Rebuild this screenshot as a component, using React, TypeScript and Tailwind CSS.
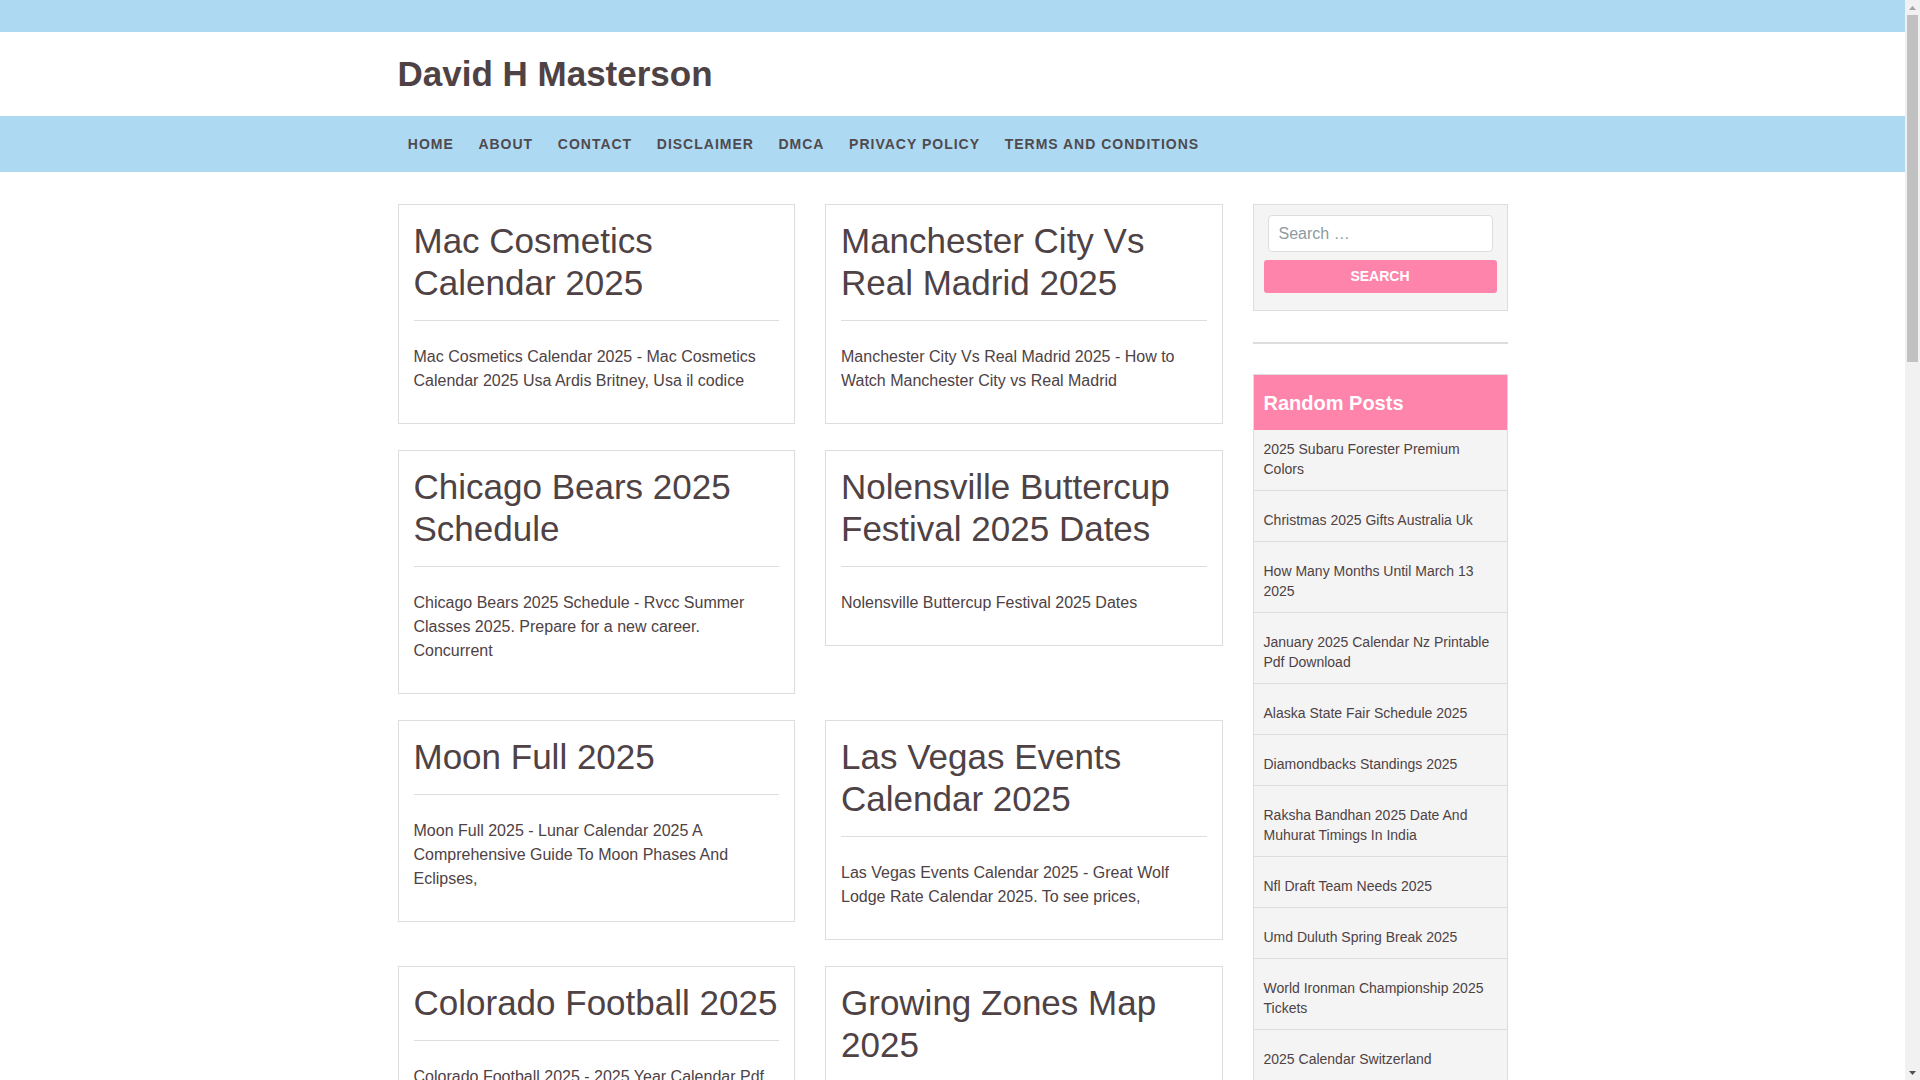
import React from 'react';

interface Post {
  title: string;
  excerpt: string;
}

const posts: Post[] = [
  { title: 'Mac Cosmetics Calendar 2025', excerpt: 'Mac Cosmetics Calendar 2025 - Mac Cosmetics Calendar 2025 Usa Ardis Britney, Usa il codice' },
  { title: 'Manchester City Vs Real Madrid 2025', excerpt: 'Manchester City Vs Real Madrid 2025 - How to Watch Manchester City vs Real Madrid' },
  { title: 'Chicago Bears 2025 Schedule', excerpt: 'Chicago Bears 2025 Schedule - Rvcc Summer Classes 2025. Prepare for a new career. Concurrent' },
  { title: 'Nolensville Buttercup Festival 2025 Dates', excerpt: 'Nolensville Buttercup Festival 2025 Dates' },
  { title: 'Moon Full 2025', excerpt: 'Moon Full 2025 - Lunar Calendar 2025 A Comprehensive Guide To Moon Phases And Eclipses,' },
  { title: 'Las Vegas Events Calendar 2025', excerpt: 'Las Vegas Events Calendar 2025 - Great Wolf Lodge Rate Calendar 2025. To see prices,' },
  { title: 'Colorado Football 2025', excerpt: 'Colorado Football 2025 - 2025 Year Calendar Pdf Printable, Colorado Buffaloes Football Schedule' },
  { title: 'Growing Zones Map 2025', excerpt: 'Growing Zones Map 2025 - Usda Plant Hardiness Zone Map Updated For' },
  { title: 'Easter Sunday 2025 Date', excerpt: 'Easter Sunday 2025 Date - When Is Easter 2025 In The United States,' },
  { title: 'Nfl Mock Draft 2025', excerpt: 'Nfl Mock Draft 2025 - Latest Projections For Every Team In The First Round' },
  { title: 'Disney World Crowd Calendar 2025', excerpt: 'Disney World Crowd Calendar 2025 - Best Times To Visit Walt Disney World' },
  { title: 'Tax Brackets 2025', excerpt: 'Tax Brackets 2025 - Federal Income Tax Rates And Brackets For 2025,' },
  { title: 'Chinese New Year 2025 Animal', excerpt: 'Chinese New Year 2025 Animal - Year Of The Snake 2025 Meaning' },
  { title: 'Super Bowl 2025 Location', excerpt: 'Super Bowl 2025 Location - Caesars Superdome New Orleans, Louisiana' },
  { title: 'March Madness 2025 Bracket', excerpt: 'March Madness 2025 Bracket - Printable Ncaa Tournament Bracket 2025' },
  { title: 'Memorial Day 2025 Weekend', excerpt: 'Memorial Day 2025 Weekend - Events And Sales Happening This Year' },
  { title: 'Ford Bronco 2025 Colors', excerpt: 'Ford Bronco 2025 Colors - Every Exterior Paint Option Available' },
  { title: 'Ramadan 2025 Start Date', excerpt: 'Ramadan 2025 Start Date - Ramadan 2025 Calendar With Sehri And Iftar Times,' },
  { title: 'Kentucky Derby 2025 Odds', excerpt: 'Kentucky Derby 2025 Odds - Early Contenders For The Run For The Roses' },
  { title: 'Academic Calendar 2025 Uga', excerpt: 'Academic Calendar 2025 Uga - University Of Georgia Important Dates' },
];

const randomPosts = [
  '2025 Subaru Forester Premium Colors',
  'Christmas 2025 Gifts Australia Uk',
  'How Many Months Until March 13 2025',
  'January 2025 Calendar Nz Printable Pdf Download',
  'Alaska State Fair Schedule 2025',
  'Diamondbacks Standings 2025',
  'Raksha Bandhan 2025 Date And Muhurat Timings In India',
  'Nfl Draft Team Needs 2025',
  'Umd Duluth Spring Break 2025',
  'World Ironman Championship 2025 Tickets',
  '2025 Calendar Switzerland',
  'Toyota Tacoma 2025 Release Date',
  'Best Beaches In Florida 2025',
  'Fall Fashion Trends 2025 Women',
  'Holi 2025 Date In India',
];

const navItems = ['Home', 'About', 'Contact', 'Disclaimer', 'DMCA', 'Privacy Policy', 'Terms and Conditions'];

function PostCard({ post }: { post: Post }) {
  return (
    <article className="bg-white border border-[#dddddd] px-[15px] pt-[15px] pb-[15px]">
      <h2 className="text-[35px] leading-[42px] font-normal text-[#4e4245]">{post.title}</h2>
      <hr className="mt-[16px] mb-[24px] border-0 border-t border-[#dddddd]" />
      <p className="text-[16px] leading-[24px] text-[#4e4245] mb-[15px]">{post.excerpt}</p>
    </article>
  );
}

// Browser scrollbar as seen in the screenshot (page scrolled to top)
function Scrollbar() {
  return (
    <div className="w-[15px] shrink-0 h-screen bg-[#f1f1f1] flex flex-col items-center">
      <div className="h-[15px] w-full flex items-center justify-center">
        <svg width="7" height="4" viewBox="0 0 7 4">
          <polygon points="3.5,0 7,4 0,4" fill="#a3a3a3" />
        </svg>
      </div>
      <div className="w-[11px] h-[347px] bg-[#c1c1c1]"></div>
      <div className="flex-1"></div>
      <div className="h-[15px] w-full flex items-center justify-center">
        <svg width="7" height="4" viewBox="0 0 7 4">
          <polygon points="0,0 7,0 3.5,4" fill="#505050" />
        </svg>
      </div>
    </div>
  );
}

export default function App() {
  return (
    <div className="flex h-screen overflow-hidden" style={{ fontFamily: '"Liberation Sans", Arial, sans-serif' }}>
      <div className="flex-1 min-w-0 h-screen overflow-y-auto bg-white text-[#4e4245]">
        {/* Top strip */}
        <div className="h-[32px] bg-[#add9f3]"></div>

        {/* Header */}
        <header className="bg-white">
          <div className="max-w-[1140px] mx-auto px-[15px] py-[21px]">
            <h1 className="text-[35px] leading-[42px] font-bold text-[#4e4245]">David H Masterson</h1>
          </div>
        </header>

        {/* Navigation */}
        <nav className="bg-[#add9f3] h-[56px]">
          <div className="max-w-[1140px] mx-auto px-[15px] h-full">
            <ul className="flex items-center h-full -ml-[2px]">
              {navItems.map((item) => (
                <li key={item}>
                  <a href="#" className="block px-[12.3px] text-[14px] font-bold uppercase tracking-[1px] text-[#4f4a4e]">
                    {item}
                  </a>
                </li>
              ))}
            </ul>
          </div>
        </nav>

        {/* Content */}
        <div className="max-w-[1140px] mx-auto px-[15px] pt-[32px] pb-[40px]">
          <div className="flex gap-[30px] items-start">
            <main className="w-[825px] shrink-0">
              <div className="grid grid-cols-2 gap-x-[30px] gap-y-[26px] items-start">
                {posts.map((post) => (
                  <PostCard key={post.title} post={post} />
                ))}
              </div>
              <div className="flex justify-center gap-[8px] mt-[30px] text-[14px]">
                <span className="px-[12px] py-[6px] bg-[#ff84ab] text-white font-bold">1</span>
                <a href="#" className="px-[12px] py-[6px] border border-[#dddddd] text-[#4e4245]">2</a>
                <a href="#" className="px-[12px] py-[6px] border border-[#dddddd] text-[#4e4245]">3</a>
                <a href="#" className="px-[12px] py-[6px] border border-[#dddddd] text-[#4e4245]">Next »</a>
              </div>
            </main>

            <aside className="w-[255px] shrink-0">
              {/* Search widget */}
              <div className="bg-[#f4f4f4] border border-[#dddddd] px-[10px] pt-[10px] pb-[17px]">
                <input
                  type="search"
                  placeholder="Search …"
                  className="block w-[225px] mx-[4px] h-[37px] bg-white border border-[#dddddd] rounded-[4px] px-[10px] text-[16px] text-[#4e4245] placeholder:text-[#8d9ba1] outline-none"
                />
                <button className="mt-[8px] block w-full h-[33px] bg-[#ff84ab] rounded-[3px] text-white text-[14px] font-bold uppercase">
                  Search
                </button>
              </div>

              <div className="mt-[31px] h-[2px] bg-[#dddddd]"></div>

              {/* Random posts */}
              <div className="mt-[30px] border border-[#dddddd]">
                <h3 className="bg-[#ff84ab] h-[55px] flex items-center px-[10px] text-[20px] font-bold text-white">
                  Random Posts
                </h3>
                <ul className="bg-[#f4f4f4]">
                  {randomPosts.map((title, i) => (
                    <li
                      key={title}
                      className={`px-[10px] pb-[11px] border-b border-[#dddddd] last:border-b-0 ${i === 0 ? 'pt-[9px]' : 'pt-[19px]'}`}
                    >
                      <a href="#" className="block text-[14px] leading-[20px] text-[#4e4245]">{title}</a>
                    </li>
                  ))}
                </ul>
              </div>
            </aside>
          </div>
        </div>

        {/* Footer */}
        <footer className="bg-[#add9f3] py-[20px]">
          <div className="max-w-[1140px] mx-auto px-[15px] text-[14px] text-[#4e4245]">
            Copyright © 2025 David H Masterson. All rights reserved.
          </div>
        </footer>
      </div>
      <Scrollbar />
    </div>
  );
}
